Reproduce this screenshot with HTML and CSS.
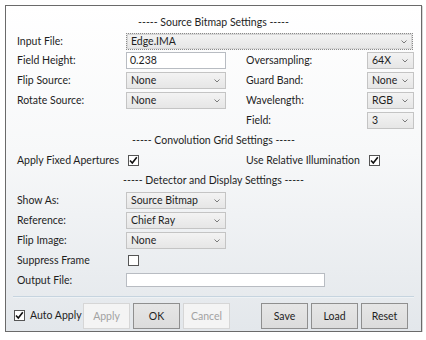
FILE: index.html
```html
<!DOCTYPE html>
<html>
<head>
<meta charset="utf-8">
<link rel="stylesheet" href="styles.css">
</head>
<body>
<div class="window">
  <div class="content">
    <div class="title">----- Source Bitmap Settings -----</div>
    <div class="row first">
      <span class="lbl">Input File:</span>
      <div class="select focus span4">Edge.IMA<svg class="chev" viewBox="0 0 6 4"><polyline points="0.5,0.5 3,3 5.5,0.5"/></svg></div>
    </div>
    <div class="row">
      <span class="lbl">Field Height:</span>
      <div class="textbox">0.238</div>
      <span></span>
      <span class="lbl">Oversampling:</span>
      <div class="select">64X<svg class="chev" viewBox="0 0 6 4"><polyline points="0.5,0.5 3,3 5.5,0.5"/></svg></div>
    </div>
    <div class="row">
      <span class="lbl">Flip Source:</span>
      <div class="select">None<svg class="chev" viewBox="0 0 6 4"><polyline points="0.5,0.5 3,3 5.5,0.5"/></svg></div>
      <span></span>
      <span class="lbl">Guard Band:</span>
      <div class="select">None<svg class="chev" viewBox="0 0 6 4"><polyline points="0.5,0.5 3,3 5.5,0.5"/></svg></div>
    </div>
    <div class="row">
      <span class="lbl">Rotate Source:</span>
      <div class="select">None<svg class="chev" viewBox="0 0 6 4"><polyline points="0.5,0.5 3,3 5.5,0.5"/></svg></div>
      <span></span>
      <span class="lbl">Wavelength:</span>
      <div class="select">RGB<svg class="chev" viewBox="0 0 6 4"><polyline points="0.5,0.5 3,3 5.5,0.5"/></svg></div>
    </div>
    <div class="row">
      <span></span><span></span><span></span>
      <span class="lbl">Field:</span>
      <div class="select">3<svg class="chev" viewBox="0 0 6 4"><polyline points="0.5,0.5 3,3 5.5,0.5"/></svg></div>
    </div>
    <div class="title">----- Convolution Grid Settings -----</div>
    <div class="row">
      <span class="lbl">Apply Fixed Apertures</span>
      <div class="cbcell"><span class="cb"><svg viewBox="0 0 11 11"><polyline points="2,5.5 4.3,8 8.8,2.2"/></svg></span></div>
      <span></span>
      <span class="lbl">Use Relative Illumination</span>
      <div class="cbcell"><span class="cb"><svg viewBox="0 0 11 11"><polyline points="2,5.5 4.3,8 8.8,2.2"/></svg></span></div>
    </div>
    <div class="title">----- Detector and Display Settings -----</div>
    <div class="row">
      <span class="lbl">Show As:</span>
      <div class="select">Source Bitmap<svg class="chev" viewBox="0 0 6 4"><polyline points="0.5,0.5 3,3 5.5,0.5"/></svg></div>
    </div>
    <div class="row">
      <span class="lbl">Reference:</span>
      <div class="select">Chief Ray<svg class="chev" viewBox="0 0 6 4"><polyline points="0.5,0.5 3,3 5.5,0.5"/></svg></div>
    </div>
    <div class="row">
      <span class="lbl">Flip Image:</span>
      <div class="select">None<svg class="chev" viewBox="0 0 6 4"><polyline points="0.5,0.5 3,3 5.5,0.5"/></svg></div>
    </div>
    <div class="row">
      <span class="lbl">Suppress Frame</span>
      <div class="cbcell"><span class="cb"></span></div>
    </div>
    <div class="row">
      <span class="lbl">Output File:</span>
      <div class="textbox output"></div>
    </div>
  </div>
  <div class="sep"></div>
  <div class="footer">
    <div class="auto"><span class="cb"><svg viewBox="0 0 11 11"><polyline points="2,5.5 4.3,8 8.8,2.2"/></svg></span><span>Auto Apply</span></div>
    <div class="btn disabled">Apply</div>
    <div class="btn">OK</div>
    <div class="btn disabled">Cancel</div>
    <div class="spacer"></div>
    <div class="btn">Save</div>
    <div class="btn">Load</div>
    <div class="btn">Reset</div>
  </div>
</div>
</body>
</html>
```
FILE: styles.css
```css
html, body {
  margin: 0;
  padding: 0;
  background: #ffffff;
}
body {
  font-family: Lato, "Noto Sans", sans-serif;
  font-size: 10.5px;
  color: #1e1e1e;
}
.window {
  margin: 5px 0 0 5px;
  width: 417px;
  height: 327px;
  box-sizing: border-box;
  border: 1px solid #6a6a6a;
  background: linear-gradient(to bottom, #ffffff 0%, #f7f8f9 45%, #e3e7eb 100%);
  box-shadow: 1px 1px 0 #d8d8d8;
  display: flex;
  flex-direction: column;
}
.content {
  padding: 7px 0 0 11px;
}
.title {
  height: 18px;
  line-height: 18px;
  text-align: center;
  margin-left: -11px;
}
.content .title ~ .title {
  height: 20px;
  line-height: 20px;
}
.row {
  display: grid;
  grid-template-columns: 109px 100px 20px 121px 47px;
  height: 20px;
  align-items: center;
}
.row.first {
  height: 19px;
}
.lbl {
  white-space: nowrap;
  line-height: 20px;
}
.select {
  position: relative;
  height: 17px;
  box-sizing: border-box;
  border: 1px solid #c4c4c4;
  background: linear-gradient(to bottom, #f3f3f3, #e6e6e6);
  padding-left: 4px;
  line-height: 15px;
  white-space: nowrap;
}
.select.focus {
  border: 1px dotted #8a8a8a;
  outline: 1px solid #d6d6d6;
  outline-offset: -2px;
  grid-column: 2 / 6;
  width: 287px;
}
.chev {
  position: absolute;
  right: 5px;
  top: 6px;
  width: 6px;
  height: 4px;
  fill: none;
  stroke: #7a7a7a;
  stroke-width: 1;
}
.textbox {
  height: 17px;
  box-sizing: border-box;
  border: 1px solid #b8bcc2;
  background: #ffffff;
  padding-left: 3px;
  line-height: 14px;
}
.textbox.output {
  width: 199px;
  height: 14px;
}
.cbcell {
  display: flex;
  align-items: center;
  padding-left: 2px;
}
.cb {
  display: inline-block;
  flex: none;
  width: 11px;
  height: 11px;
  box-sizing: border-box;
  border: 1px solid #555555;
  background: #ffffff;
  position: relative;
}
.cb svg {
  position: absolute;
  left: -1px;
  top: -1px;
  width: 11px;
  height: 11px;
  fill: none;
  stroke: #111111;
  stroke-width: 1.6;
}
.sep {
  margin: 6px 7px 0 7px;
  height: 1px;
  background: #c6d4df;
  border-bottom: 1px solid #eef2f5;
}
.footer {
  display: flex;
  align-items: center;
  padding: 5px 0 0 8px;
  gap: 3px;
}
.auto {
  display: flex;
  align-items: center;
  gap: 5px;
  width: 66px;
  flex: none;
  white-space: nowrap;
  margin-top: -2px;
}
.btn {
  flex: none;
  width: 47px;
  height: 26px;
  box-sizing: border-box;
  border: 1px solid #8f8f8f;
  background: linear-gradient(to bottom, #e6e6e6, #dcdcdc);
  text-align: center;
  line-height: 24px;
}
.btn.disabled {
  border-color: #d6d6d6;
  background: #f4f4f4;
  color: #a2a2a2;
}
.spacer {
  flex: none;
  width: 25px;
}
```
